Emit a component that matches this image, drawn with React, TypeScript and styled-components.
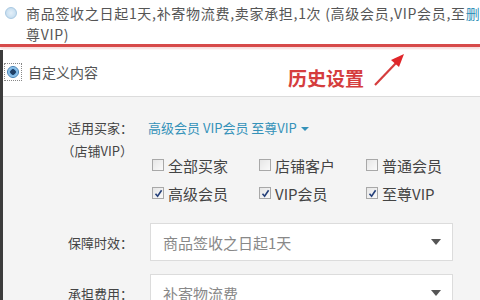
import React from "react";
import styled, { createGlobalStyle } from "styled-components";

const Global = createGlobalStyle`
  html, body { margin: 0; padding: 0; background: #fff; }
  body { font-family: "Noto Sans CJK SC", "Noto Sans", sans-serif; }
`;

const Page = styled.div`
  width: 480px;
  height: 300px;
  overflow: hidden;
  background: #fff;
  display: flex;
  flex-direction: column;
`;

const TopBlock = styled.div`
  flex: none;
  height: 44px;
  padding-top: 3px;
  box-sizing: border-box;
  display: flex;
  align-items: flex-start;
  gap: 9px;
  padding-left: 5px;
  overflow: hidden;
`;

const Radio = styled.span<{ $on?: boolean }>`
  flex: none;
  width: 12px;
  height: 12px;
  border-radius: 50%;
  margin-top: ${(p) => (p.$on ? "0" : "4px")};
  box-sizing: border-box;
  border: 1px solid ${(p) => (p.$on ? "#3f7fb5" : "#a9c9e2")};
  background: ${(p) =>
    p.$on
      ? "radial-gradient(circle, #1f3f66 0 2.5px, #6fb0e3 3px, #d9ecfa 100%)"
      : "radial-gradient(circle, #e4f0f9 0, #bcd7ec 100%)"};
`;

const FocusRing = styled.span`
  flex: none;
  padding: 2px;
  border: 1px dotted #888;
  display: flex;
`;

const HistoryText = styled.div`
  font-size: 14px;
  line-height: 21px;
  color: #555;
  white-space: nowrap;
  letter-spacing: 0.7px;
`;

const Link = styled.span`
  color: #3592b9;
`;

const RedRule = styled.div`
  flex: none;
  height: 3px;
  background: #d74a4a;
  box-shadow: 0 2px 2px rgba(230, 150, 150, 0.35);
`;

const Body = styled.div`
  flex: none;
  border-left: 3px solid #3c3c3c;
  margin-top: 3px;
  display: flex;
  flex-direction: column;
`;

const CustomSection = styled.div`
  flex: none;
  position: relative;
  height: 47px;
  background: #fff;
  border-bottom: 1px solid #dcdcdc;
  display: flex;
  align-items: center;
  gap: 6px;
  padding-left: 1px;
  padding-bottom: 2px;
  box-sizing: border-box;
`;

const CustomLabel = styled.span`
  font-size: 14px;
  color: #555;
`;

const Annotation = styled.div`
  position: absolute;
  left: 285px;
  top: 16px;
  font-size: 19px;
  font-weight: bold;
  color: #d53d3d;
  line-height: 24px;
`;

const ArrowSvg = styled.svg`
  position: absolute;
  left: 367px;
  top: 3px;
`;

const Form = styled.div`
  background: #f4f4f4;
  display: grid;
  grid-template-columns: 130px 1fr;
  column-gap: 17px;
  padding: 23px 27px 0 0;
  align-content: start;
`;

const Label = styled.div<{ $center?: boolean }>`
  font-size: 13px;
  line-height: 23px;
  color: #444;
  text-align: right;
  align-self: ${(p) => (p.$center ? "center" : "start")};
  margin-top: ${(p) => (p.$center ? "0" : "-4px")};
`;

const Values = styled.div`
  display: flex;
  flex-direction: column;
`;

const LevelLink = styled.div`
  font-size: 13px;
  line-height: 16px;
  color: #3592b9;
  display: flex;
  align-items: center;
  gap: 4px;
  margin-left: -2px;
`;

const Caret = styled.span`
  width: 0;
  height: 0;
  border-left: 4px solid transparent;
  border-right: 4px solid transparent;
  border-top: 4px solid #3592b9;
  margin-top: 2px;
`;

const CheckGrid = styled.div`
  display: grid;
  grid-template-columns: 107px 107px 1fr;
  grid-auto-rows: 28px;
  margin-top: 15px;
  margin-bottom: 16px;
`;

const CheckItem = styled.label`
  display: flex;
  align-items: center;
  gap: 4px;
  font-size: 15px;
  color: #444;
  padding-left: 2px;
`;

const Box = styled.span`
  width: 12px;
  height: 12px;
  box-sizing: border-box;
  border: 1px solid #a8a8a8;
  background: linear-gradient(135deg, #e6e6e6, #fafafa);
  display: flex;
  align-items: center;
  justify-content: center;
`;

const Select = styled.div`
  height: 38px;
  box-sizing: border-box;
  background: #fff;
  border: 1px solid #dcdcdc;
  display: flex;
  align-items: center;
  justify-content: space-between;
  padding: 0 11px 0 12px;
  font-size: 15px;
  color: #888;
  margin-bottom: 13px;
`;

const SelectCaret = styled.span`
  width: 0;
  height: 0;
  border-left: 5px solid transparent;
  border-right: 5px solid transparent;
  border-top: 6px solid #555;
`;

const Check = ({ on, label }: { on: boolean; label: string }) => (
  <CheckItem>
    <Box>
      {on && (
        <svg width="9" height="9" viewBox="0 0 9 9">
          <path d="M1.5 4.8 L3.6 7.2 L7.6 1.2" fill="none" stroke="#25407a" strokeWidth="1.6" />
        </svg>
      )}
    </Box>
    {label}
  </CheckItem>
);

export default function App() {
  return (
    <Page>
      <Global />
      <TopBlock>
        <Radio />
        <HistoryText>
          <div>
            商品签收之日起1天,补寄物流费,卖家承担,1次 (高级会员,VIP会员,至<Link>删除</Link>
          </div>
          <div>尊VIP)</div>
        </HistoryText>
      </TopBlock>
      <RedRule />
      <Body>
        <CustomSection>
          <FocusRing>
            <Radio $on />
          </FocusRing>
          <CustomLabel>自定义内容</CustomLabel>
          <Annotation>历史设置</Annotation>
          <ArrowSvg width="40" height="36" viewBox="0 0 40 36">
            <line x1="5" y1="32" x2="27" y2="9" stroke="#d53d3d" strokeWidth="2.2" />
            <polygon points="34,1 21,7 29,14" fill="#e0262a" />
          </ArrowSvg>
        </CustomSection>
        <Form>
          <Label>
            适用买家：
            <br />
            （店铺VIP）
          </Label>
          <Values>
            <LevelLink>
              高级会员 VIP会员 至尊VIP <Caret />
            </LevelLink>
            <CheckGrid>
              <Check on={false} label="全部买家" />
              <Check on={false} label="店铺客户" />
              <Check on={false} label="普通会员" />
              <Check on label="高级会员" />
              <Check on label="VIP会员" />
              <Check on label="至尊VIP" />
            </CheckGrid>
          </Values>
          <Label $center style={{ marginBottom: 13 }}>保障时效：</Label>
          <Select>
            商品签收之日起1天
            <SelectCaret />
          </Select>
          <Label $center style={{ marginBottom: 13 }}>承担费用：</Label>
          <Select>
            补寄物流费
            <SelectCaret />
          </Select>
        </Form>
      </Body>
    </Page>
  );
}
